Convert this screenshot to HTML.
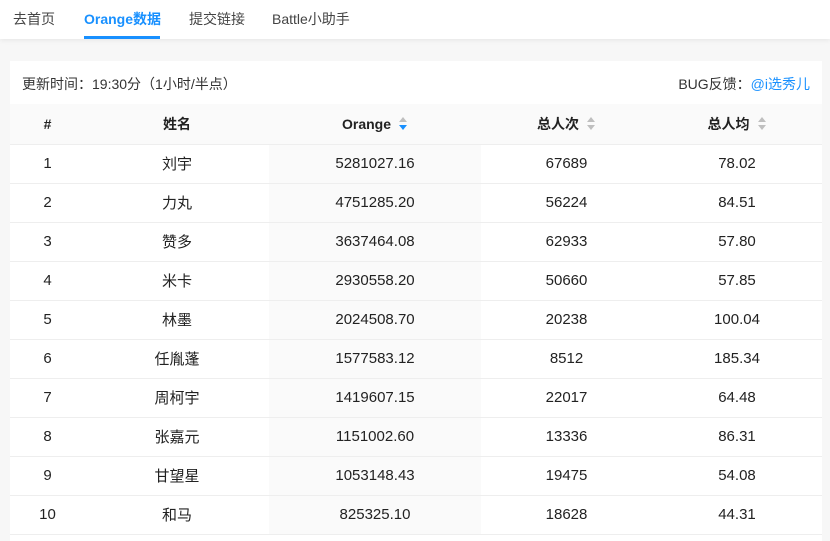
<!DOCTYPE html>
<html><head><meta charset="utf-8"><style>
*{margin:0;padding:0;box-sizing:border-box}
body{width:830px;height:532px;overflow:hidden;background:#f7f7f7;font-family:"Liberation Sans","Noto Sans CJK SC",sans-serif;color:#333;font-size:14px}
.nav{position:absolute;left:0;top:0;width:830px;height:39px;background:#fff;box-shadow:0 1px 5px rgba(0,0,0,.08)}
.nav span{position:absolute;top:9px;font-size:14px;color:#444}
.nav .act{color:#1890ff;font-weight:bold}
.nav .bar{position:absolute;left:84px;top:36px;width:76px;height:3px;background:#1890ff}
.card{position:absolute;left:10px;top:61px;width:812px;height:480px;background:#fff}
.info{height:43px;position:relative;font-size:14px;color:#333}
.info .l{position:absolute;left:12px;top:13px}
.info .r{position:absolute;right:12px;top:13px}
.info .r b{font-weight:normal;color:#1890ff}
table{border-collapse:collapse;width:812px;table-layout:fixed}
th{height:40px;background:#fafafa;font-weight:bold;font-size:14px;color:#222;text-align:center;border-bottom:1px solid #eee}
td{height:39px;text-align:center;border-bottom:1px solid #eee;font-size:15px;color:#222;padding:0}
td:nth-child(3){background:#fafafa}
.s{display:inline-block;vertical-align:middle;margin-left:8px;width:9px;height:14px;position:relative;top:-1px}
.s i{position:absolute;left:0;width:0;height:0;border-left:4.5px solid transparent;border-right:4.5px solid transparent}
.s .u{top:0;border-bottom:5px solid #bfbfbf}
.s .d{top:8px;border-top:5px solid #bfbfbf}
.s .d.on{border-top-color:#1890ff}
</style></head><body>
<div class="nav">
<span style="left:13px">去首页</span>
<span class="act" style="left:84px">Orange数据</span>
<span style="left:189px">提交链接</span>
<span style="left:272px">Battle小助手</span>
<div class="bar"></div>
</div>
<div class="card">
<div class="info"><span class="l">更新时间：19:30分（1小时/半点）</span><span class="r">BUG反馈：<b>@i选秀儿</b></span></div>
<table>
<colgroup><col style="width:75px"><col style="width:184px"><col style="width:212px"><col style="width:171px"><col style="width:170px"></colgroup>
<tr><th>#</th><th>姓名</th><th>Orange<span class="s"><i class="u"></i><i class="d on"></i></span></th><th>总人次<span class="s"><i class="u"></i><i class="d"></i></span></th><th>总人均<span class="s"><i class="u"></i><i class="d"></i></span></th></tr>
<tr><td>1</td><td>刘宇</td><td>5281027.16</td><td>67689</td><td>78.02</td></tr>
<tr><td>2</td><td>力丸</td><td>4751285.20</td><td>56224</td><td>84.51</td></tr>
<tr><td>3</td><td>赞多</td><td>3637464.08</td><td>62933</td><td>57.80</td></tr>
<tr><td>4</td><td>米卡</td><td>2930558.20</td><td>50660</td><td>57.85</td></tr>
<tr><td>5</td><td>林墨</td><td>2024508.70</td><td>20238</td><td>100.04</td></tr>
<tr><td>6</td><td>任胤蓬</td><td>1577583.12</td><td>8512</td><td>185.34</td></tr>
<tr><td>7</td><td>周柯宇</td><td>1419607.15</td><td>22017</td><td>64.48</td></tr>
<tr><td>8</td><td>张嘉元</td><td>1151002.60</td><td>13336</td><td>86.31</td></tr>
<tr><td>9</td><td>甘望星</td><td>1053148.43</td><td>19475</td><td>54.08</td></tr>
<tr><td>10</td><td>和马</td><td>825325.10</td><td>18628</td><td>44.31</td></tr>
</table>
</div>
</body></html>
